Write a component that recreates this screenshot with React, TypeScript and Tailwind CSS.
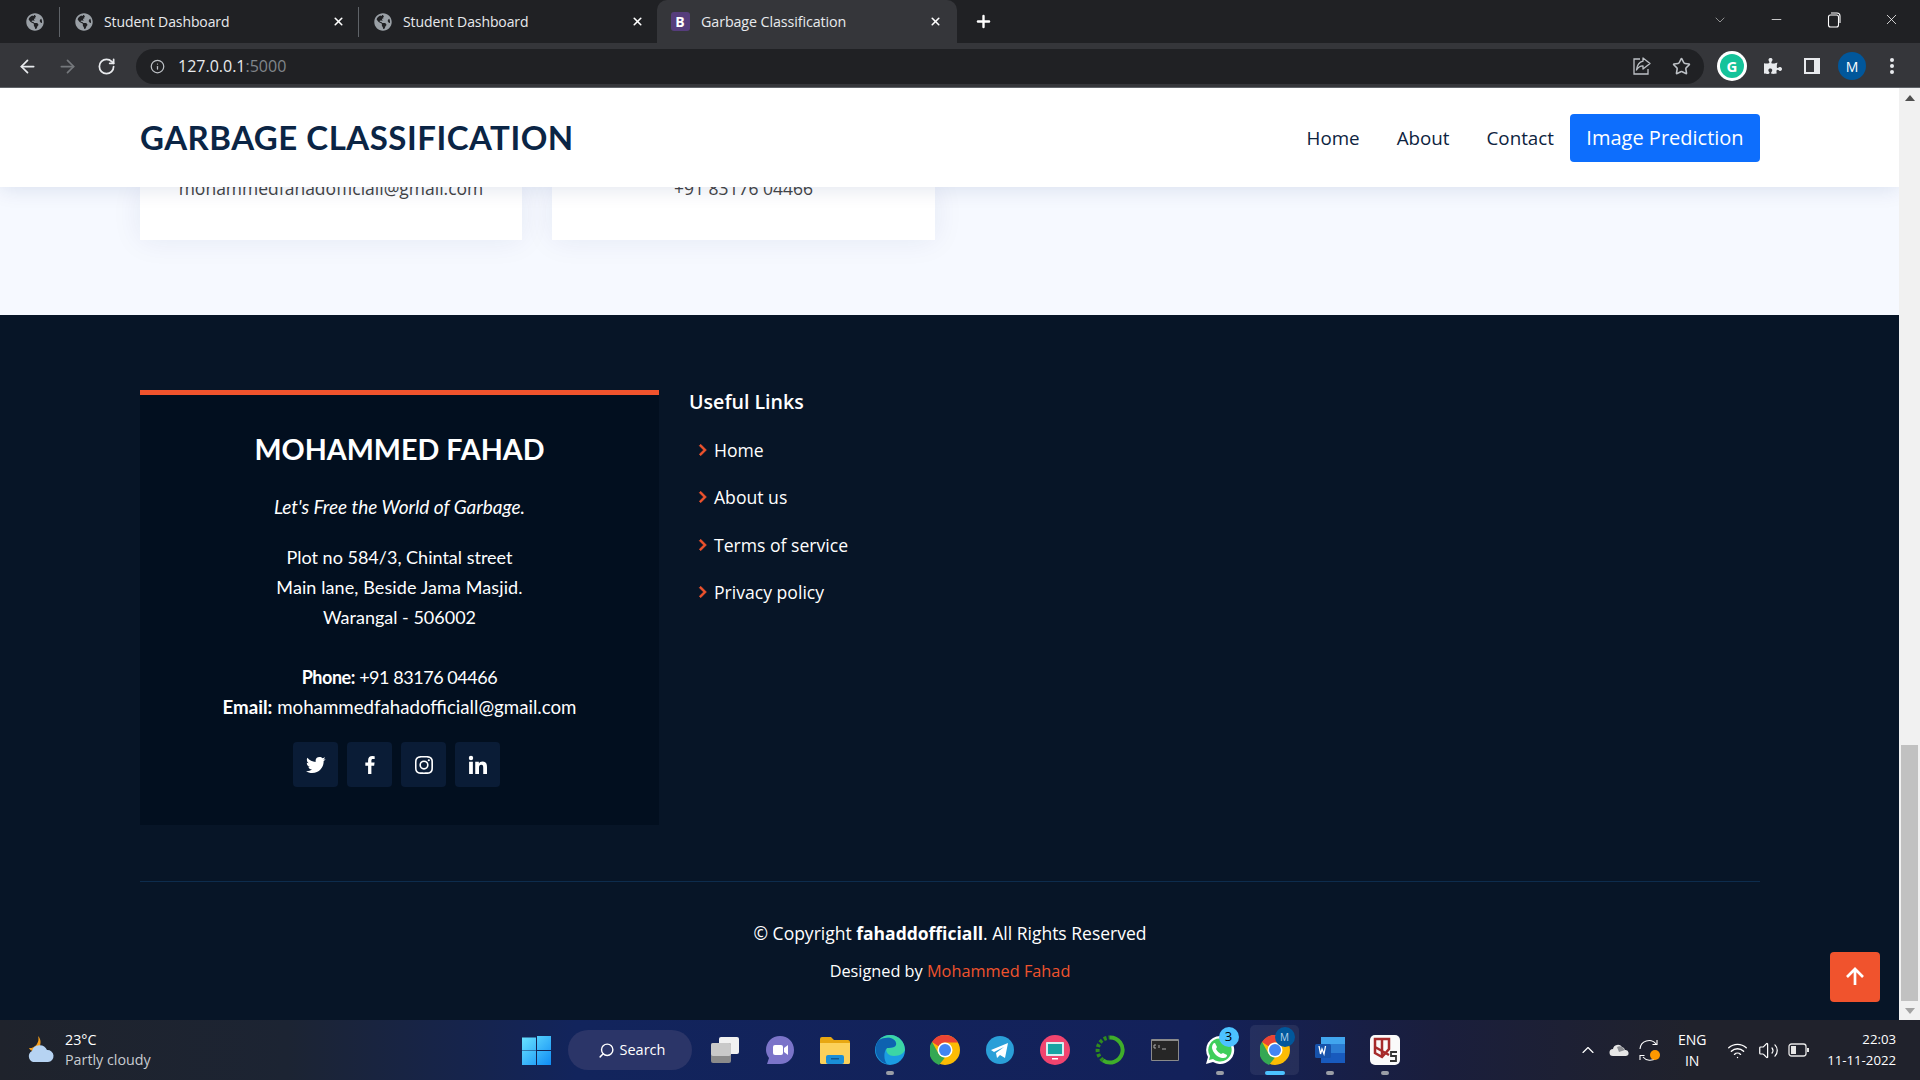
import React from "react";
import { ArrowLeft, ArrowRight, RotateCw, Info, Star, X, Plus, ChevronDown, ChevronUp, Minus, Search, Wifi, Volume2 } from "lucide-react";
import { FaGlobeAmericas, FaPuzzlePiece } from "react-icons/fa";
import { BiLogoTwitter, BiLogoFacebook, BiLogoInstagram, BiLogoLinkedin, BiChevronRight, BiUpArrowAlt } from "react-icons/bi";

const ui = "font-['Open_Sans','Noto_Sans',sans-serif]";
const rw = "font-['Lato','Open_Sans',sans-serif]";

function Tab({ title, active, icon, width }: { title: string; active?: boolean; icon: React.ReactNode; width: string }) {
  return (
    <div className={`flex items-center ${width} ${active ? "h-[43px] pl-[13px] pr-[15px] bg-[#35363a] rounded-t-[10px] self-end" : "h-[30px] pl-[14px] pr-[13px] border-l border-[#5f6368]"}`}>
      <span className={`w-[20px] h-[20px] flex items-center justify-center ${active ? "mr-[11px]" : "mr-[10px]"}`}>{icon}</span>
      <span className={`flex-1 tracking-[-0.1px] text-[#e8eaed] ${active ? "text-[14.300px]" : "text-[14px]"} ${ui}`}>{title}</span>
      <X size={13} strokeWidth={3} className="text-white" />
    </div>
  );
}

function TabStrip() {
  return (
    <div className="h-[43px] bg-[#202124] flex items-center shrink-0">
      <span className="w-[59px] flex justify-center pl-[10px]"><FaGlobeAmericas size={18} className="text-[#9aa0a6]" /></span>
      <Tab width="w-[299px]" title="Student Dashboard" icon={<FaGlobeAmericas size={18} className="text-[#9aa0a6]" />} />
      <Tab width="w-[299px]" title="Student Dashboard" icon={<FaGlobeAmericas size={18} className="text-[#9aa0a6]" />} />
      <Tab width="w-[300px]" active title="Garbage Classification" icon={<span className={`w-[19px] h-[19px] rounded-[3px] bg-[#563d7c] text-white text-[14px] font-bold flex items-center justify-center ${ui}`}>B</span>} />
      <Plus size={19} strokeWidth={3} className="text-white ml-[17px]" />
      <div className="flex-1 flex justify-end items-center text-white pr-[20px] -mt-[4px]">
        <ChevronDown size={16} strokeWidth={1} className="mr-[41px] text-[#c8c8c8]" />
        <Minus size={15} strokeWidth={1.2} className="mr-[43px]" />
        <svg width="14" height="16" viewBox="0 0 14 16" className="mr-[42px]" fill="none" stroke="white" strokeWidth="1.1"><rect x="1.5" y="3" width="10" height="12" rx="2" /><path d="M4 1h6a3 3 0 0 1 3 3v7" /></svg>
        <X size={17} strokeWidth={1.1} />
      </div>
    </div>
  );
}

function Toolbar() {
  return (
    <div className="h-[45px] bg-[#35363a] flex items-center shrink-0 border-b border-[#5f6368] pt-[2px]">
      <div className="w-[136px] flex items-center pl-[17px] gap-[19px]">
        <ArrowLeft size={21} strokeWidth={2} className="text-[#e8eaed]" />
        <ArrowRight size={21} strokeWidth={2} className="text-[#75787c]" />
        <RotateCw size={19} strokeWidth={2.2} className="text-[#e8eaed]" />
      </div>
      <div className="w-[1568px] h-[35px] rounded-full bg-[#202124] flex items-center pl-[14px] pr-[11px]">
        <Info size={15} className="text-[#bdc1c6]" />
        <span className={`ml-[13px] flex-1 text-[16px] text-[#e8eaed] ${ui}`}>127.0.0.1<span className="text-[#80868b]">:5000</span></span>
        <svg width="20" height="20" viewBox="0 0 20 20" fill="none" stroke="#bdc1c6" strokeWidth="1.300" className="mr-[20px]">
          <path d="M8 3H2v15h14v-5" />
          <path d="M11 2l7 5.500-7 5.500V9.800C8 9.800 6 11 4.500 14 5 9.500 7.500 6 11 5.200z" strokeLinejoin="round" />
        </svg>
        <Star size={19} className="text-[#bdc1c6] mr-[2px]" />
      </div>
      <div className="flex-1 flex items-center pl-[13px]">
        <span className="w-[30px] h-[30px] rounded-full bg-white flex items-center justify-center">
          <span className={`w-[24px] h-[24px] rounded-full bg-[#15c39a] text-white text-[15px] font-bold flex items-center justify-center ${ui}`}>G</span>
        </span>
        <FaPuzzlePiece size={18} className="text-[#e8eaed] ml-[17px]" />
        <svg width="18" height="18" viewBox="0 0 18 18" className="ml-[21px]"><path fillRule="evenodd" fill="#e8eaed" d="M1 1h16v16H1zM3 3v12h8V3z" /></svg>
        <span className={`ml-[17px] w-[28px] h-[28px] rounded-full bg-[#01579b] text-white text-[14px] flex items-center justify-center ${ui}`}>M</span>
        <svg width="4" height="18" viewBox="0 0 4 18" className="ml-[24px]" fill="#e8eaed"><circle cx="2" cy="3" r="2" /><circle cx="2" cy="9" r="2" /><circle cx="2" cy="15" r="2" /></svg>
      </div>
    </div>
  );
}

function Header() {
  return (
    <header className="relative z-10 h-[99px] shrink-0 bg-white shadow-[0_2px_20px_rgba(1,41,112,0.12)] flex items-center justify-between pl-[140px] pr-[139px]">
      <span className={`text-[33px] font-bold leading-none tracking-[0.5px] text-[#0b2545] ${rw}`}>GARBAGE CLASSIFICATION</span>
      <nav className={`flex items-center text-[18.8px] text-[#0d2340] ${ui}`}>
        <a className="mr-[37px] pt-[1px] -ml-[1px]">Home</a>
        <a className="mr-[37px] pt-[1px]">About</a>
        <a className="mr-[16px] pt-[1px]">Contact</a>
        <a className="w-[190px] h-[48px] rounded-[4px] bg-[#0d6efd] text-white text-[20px] flex items-center justify-center">Image Prediction</a>
      </nav>
    </header>
  );
}

function ContactCard({ text, narrow, size }: { text: string; narrow?: boolean; size: string }) {
  return (
    <div className={`h-[53px] bg-white shadow-[0_0_30px_rgba(1,41,112,0.08)] text-center ${narrow ? "w-[382px]" : "w-[383px]"}`}>
      <p className={`-mt-[11px] leading-[24px] text-[#444444] ${size} ${ui}`}>{text}</p>
    </div>
  );
}

function Section() {
  return (
    <section className="h-[128px] shrink-0 bg-[#f6f9ff] pl-[140px] flex gap-[30px]">
      <ContactCard narrow size="text-[17.5px]" text="mohammedfahadofficiall@gmail.com" />
      <ContactCard size="text-[17.5px]" text="+91 83176 04466" />
    </section>
  );
}

function Social({ children }: { children: React.ReactNode }) {
  return <a className="w-[45px] h-[45px] rounded-[4px] bg-[#0a1c36] flex items-center justify-center text-white text-[24px]">{children}</a>;
}

function Footer() {
  const links = ["Home", "About us", "Terms of service", "Privacy policy"];
  return (
    <footer className="relative flex-1 bg-[#071527] text-white pt-[75px] pl-[140px] pr-[139px]">
      <div className="flex gap-[30px]">
        <div className={`w-[519px] h-[435px] bg-[#020f1f] border-t-[5px] border-[#f0532d] pt-[37px] text-center text-[18px] leading-[30px] ${rw}`}>
          <h3 className="text-[28.700px] leading-[34px] font-bold">MOHAMMED FAHAD</h3>
          <p className="mt-[26px] italic text-[19px]">Let's Free the World of Garbage.</p>
          <p className="mt-[20px]">Plot no 584/3, Chintal street<br /><span className="tracking-[0.1px]">Main lane, Beside Jama Masjid.</span><br />Warangal - 506002</p>
          <p className="mt-[30px]"><span className="tracking-[-0.45px]"><b>Phone:</b> +91 83176 04466</span><br /><span className="text-[18.700px]"><b>Email:</b> mohammedfahadofficiall@gmail.com</span></p>
          <div className="mt-[20px] flex justify-center gap-[9px] pr-[6px]">
            <Social><BiLogoTwitter /></Social>
            <Social><BiLogoFacebook /></Social>
            <Social><BiLogoInstagram /></Social>
            <Social><BiLogoLinkedin /></Social>
          </div>
        </div>
        <div className={`pt-[1px] ${ui}`}>
          <h4 className="text-[19.600px] leading-[22px] font-semibold">Useful Links</h4>
          <ul className="mt-[13px] text-[17.600px]">
            {links.map((l) => (
              <li key={l} className="h-[47.5px] flex items-center">
                <BiChevronRight className="text-[#f0532d] text-[24px] ml-[1px] stroke-[#f0532d] stroke-[0.6px]" />
                <span>{l}</span>
              </li>
            ))}
          </ul>
        </div>
      </div>
      <div className="mt-[56px] border-t border-[#0d2c4d]" />
      <p className={`mt-[38px] text-center text-[17.5px] leading-[26px] ${ui}`}>© Copyright <b>fahaddofficiall</b>. All Rights Reserved</p>
      <p className={`mt-[12px] text-center text-[16.3px] leading-[26px] ${ui}`}>Designed by <span className="text-[#f0532d]">Mohammed Fahad</span></p>
      <a className="absolute right-[19px] top-[637px] w-[50px] h-[50px] rounded-[4px] bg-[#f0532d] flex items-center justify-center text-white text-[32px]"><BiUpArrowAlt /></a>
    </footer>
  );
}

function Scrollbar() {
  return (
    <div className="w-[21px] shrink-0 bg-[#f1f1f1] flex flex-col items-center">
      <div className="h-[16px] shrink-0 flex items-center justify-center mt-[2px]">
        <span className="w-0 h-0 border-x-[5px] border-x-transparent border-b-[6px] border-b-[#505050]" />
      </div>
      <div className="flex-1" />
      <div className="w-[17px] h-[256px] bg-[#c1c1c1] shrink-0" />
      <div className="h-[19px] shrink-0 flex items-center justify-center">
        <span className="w-0 h-0 border-x-[5px] border-x-transparent border-t-[6px] border-t-[#a3a3a3]" />
      </div>
    </div>
  );
}

function Slot({ children, dot, active }: { children: React.ReactNode; dot?: boolean; active?: boolean }) {
  return (
    <div className="relative w-[55px] h-[52px] flex items-center justify-center">
      {active && <span className="absolute left-[3px] right-[3px] top-[1px] bottom-[1px] rounded-[5px] bg-[#ffffff12]" />}
      <span className="relative flex">{children}</span>
      {dot && <span className="absolute bottom-[1px] left-1/2 -translate-x-1/2 w-[8px] h-[4px] rounded-full bg-[#9a9ea6]" />}
      {active && <span className="absolute bottom-[1px] left-1/2 -translate-x-1/2 w-[20px] h-[4px] rounded-full bg-[#4cc2ff]" />}
    </div>
  );
}

const ChromeIcon = () => (
  <svg width="30" height="30" viewBox="0 0 30 30">
    <circle cx="15" cy="15" r="15" fill="#fbbc04" />
    <path d="M15 0a15 15 0 0 1 13 7.5H15a7.5 7.5 0 0 0-6.5 3.8L2 7A15 15 0 0 1 15 0z" fill="#ea4335" />
    <path d="M2 7l6.5 11.5A7.5 7.5 0 0 0 15 22.5L9 30A15 15 0 0 1 2 7z" fill="#34a853" />
    <circle cx="15" cy="15" r="7.5" fill="white" /><circle cx="15" cy="15" r="6" fill="#4285f4" />
  </svg>
);

function Taskbar() {
  return (
    <div className="relative h-[60px] shrink-0 bg-[linear-gradient(90deg,#1f232c_0%,#1c2433_15%,#12245c_30%,#13215a_62%,#1a1e3c_75%,#20222c_88%)] flex items-center text-white">
      <div className={`absolute left-[24px] top-0 h-full flex items-center ${ui}`}>
        <svg width="31" height="30" viewBox="0 0 31 30">
          <path d="M14 1a9 9 0 0 1-9 12 5 5 0 0 0 5 3 9 9 0 0 0 4-15z" fill="#f59e1b" />
          <path d="M9 27a6 6 0 0 1-1-11 8 8 0 0 1 15-1 6 6 0 0 1 1 12z" fill="#b6d3f2" />
        </svg>
        <div className="ml-[10px] text-[14.300px] leading-[20px]">
          <div>23°C</div>
          <div className="text-[#c8cbd1]">Partly cloudy</div>
        </div>
      </div>
      <div className="absolute left-[522px] top-0 h-full flex items-center">
        <svg width="29" height="29" viewBox="0 0 29 29">
          <defs><linearGradient id="w" x1="0" y1="0" x2="1" y2="1"><stop offset="0" stopColor="#6be4ff" /><stop offset="1" stopColor="#0f8cf5" /></linearGradient></defs>
          <path fill="url(#w)" d="M0 1.500h14v13H0zM15 0h14v14H15zM0 15h14v14H0zM15 15h14v14H15z" />
        </svg>
        <div className={`ml-[17px] w-[124px] h-[40px] rounded-full bg-[#2b3568] flex items-center justify-center text-[14.500px] pl-[3px] ${ui}`}>
          <Search size={17} className="mr-[5px] -scale-x-100" />Search
        </div>
      </div>
      <div className="absolute left-[697px] top-[4px] flex">
        <Slot>
          <svg width="30" height="28" viewBox="0 0 30 28"><rect x="9" y="1" width="20" height="17" rx="2" fill="#f1f1f1" /><rect x="1" y="7" width="20" height="20" rx="2" fill="#8b8b8b" /><rect x="1" y="7" width="20" height="13" rx="2" fill="#c9c9c9" /></svg>
        </Slot>
        <Slot>
          <svg width="30" height="30" viewBox="0 0 30 30"><path d="M15 1c8 0 14 6 14 14s-6 14-14 14H2l2-6C2 20 1 18 1 15 1 7 7 1 15 1z" fill="#7b74c9" /><rect x="8" y="10" width="10" height="10" rx="2" fill="white" /><path d="M19 13l4-3v10l-4-3z" fill="white" /></svg>
        </Slot>
        <Slot>
          <svg width="30" height="28" viewBox="0 0 30 28"><path d="M0 3a2 2 0 0 1 2-2h9l3 3h14a2 2 0 0 1 2 2v20a2 2 0 0 1-2 2H2a2 2 0 0 1-2-2z" fill="#e8a712" /><path d="M0 7h30v19a2 2 0 0 1-2 2H2a2 2 0 0 1-2-2z" fill="#fcd15b" /><rect x="6" y="19" width="18" height="9" rx="2" fill="#1a8fd8" /><rect x="11" y="22" width="8" height="1.500" fill="#0d5a96" /></svg>
        </Slot>
        <Slot dot>
          <svg width="30" height="30" viewBox="0 0 30 30"><circle cx="15" cy="15" r="15" fill="#1b9de2" /><path d="M30 15A15 15 0 0 0 3 6c5-4 16-5 18 2 1 4-4 5-9 5-2 2 0 8 7 8 6 0 10-3 11-6z" fill="#3cd5a5" /><path d="M3 6C-2 14 1 26 12 29c-3-3-4-12 0-16 5 0 10-1 9-5C19 1 8 2 3 6z" fill="#0e62b0" /></svg>
        </Slot>
        <Slot><ChromeIcon /></Slot>
        <Slot>
          <svg width="28" height="28" viewBox="0 0 28 28"><circle cx="14" cy="14" r="14" fill="#2a9fd8" /><path d="M5 14l17-7-3 15-5-3-3 3-1-5 8-6-10 5z" fill="white" /></svg>
        </Slot>
        <Slot>
          <svg width="30" height="30" viewBox="0 0 30 30"><circle cx="15" cy="15" r="15" fill="#f0446f" /><rect x="6" y="7" width="18" height="14" rx="1" fill="#d8eef0" /><rect x="8" y="9" width="14" height="10" fill="#17a3a3" /><rect x="12" y="23" width="6" height="1.500" fill="white" /></svg>
        </Slot>
        <Slot>
          <svg width="30" height="30" viewBox="0 0 30 30" fill="none"><path d="M15 2.500a12.500 12.500 0 1 1-7 22.800" stroke="#3fae2a" strokeWidth="4" /><path d="M8 25.300A12.500 12.500 0 0 1 15 2.500" stroke="#2f8c1e" strokeWidth="4" strokeDasharray="3 2" /></svg>
        </Slot>
        <Slot>
          <svg width="28" height="22" viewBox="0 0 28 22"><rect width="28" height="22" rx="1" fill="#8a8a8a" /><rect x="1" y="2" width="26" height="19" fill="#262626" /><path d="M5 6H3v3h2M8 6v3M11 10h4" stroke="#aaa" fill="none" /></svg>
        </Slot>
        <Slot dot>
          <svg width="30" height="30" viewBox="0 0 30 30"><path d="M15 1a14 14 0 0 0-12 21L1 29l7-2A14 14 0 1 0 15 1z" fill="white" /><path d="M15 3.500a11.500 11.500 0 0 0-10 17.500l-1 4 4-1a11.500 11.500 0 1 0 7-20.500z" fill="#3fce5b" /><path d="M10 8l2 4-1 2c1 2 3 4 5 5l2-1 4 2c0 3-3 3-5 3-5-1-9-5-10-10 0-3 1-5 3-5z" fill="white" /></svg>
          <span className={`absolute -right-[4px] -top-[8px] w-[20px] h-[20px] rounded-full bg-[#4cc2ff] text-black text-[13px] flex items-center justify-center ${ui}`}>3</span>
        </Slot>
        <Slot active>
          <ChromeIcon />
          <span className={`absolute -right-[5px] -top-[8px] w-[20px] h-[20px] rounded-full bg-[#01579b] text-[#b8d4ec] text-[10px] flex items-center justify-center ${ui}`}>M</span>
        </Slot>
        <Slot dot>
          <svg width="30" height="28" viewBox="0 0 30 28"><rect x="6" y="1" width="24" height="26" rx="2" fill="#2b7cd3" /><rect x="6" y="1" width="24" height="7" fill="#41a5ee" /><rect x="6" y="17" width="24" height="10" fill="#185abd" /><rect x="0" y="8" width="16" height="14" rx="1.500" fill="#1652ab" /><path d="M3 11l1.500 8 1.500-5 2 5 1.500-8" transform="translate(1 -1)" stroke="white" strokeWidth="1.300" fill="none" /></svg>
        </Slot>
        <Slot dot>
          <svg width="30" height="30" viewBox="0 0 30 30"><rect width="30" height="30" rx="5" fill="#fafafa" /><path d="M5 4h14v10l-7 8-7-4zM12 4v18M5 12l14 8" stroke="#a62b2b" strokeWidth="2.500" fill="none" /><path d="M27 17h-6v4h5v5h-6" stroke="#333" strokeWidth="1.800" fill="none" /></svg>
        </Slot>
      </div>
      <div className={`absolute right-[24px] top-0 h-full flex items-center ${ui}`}>
        <ChevronUp size={20} strokeWidth={1.4} className="mr-[11px]" />
        <svg width="20" height="14" viewBox="0 0 20 14" className="mr-[9px]"><path d="M4 13a3.500 3.500 0 0 1 0-7 5 5 0 0 1 9-2 4 4 0 0 1 3 3 3 3 0 0 1 1 6z" fill="#e6e6e6" /><path d="M8 4a5 5 0 0 1 5 0l3 3-6 2z" fill="#8d8f94" /></svg>
        <span className="relative w-[22px] h-[22px] mr-[14px]">
          <svg width="22" height="22" viewBox="0 0 22 22" fill="none" stroke="white" strokeWidth="1.100">
            <path d="M2 10a9 9 0 0 1 16-5M19 1v4.500h-4.500" />
            <path d="M18 19a9 9 0 0 1-13-1M2 21v-4.500h4.500" />
          </svg>
          <span className="absolute right-0 bottom-[1px] w-[10px] h-[10px] rounded-full bg-[#ff9800]" />
        </span>
        <div className="w-[36px] text-center text-[14px] leading-[21px] mr-[17px]"><div>ENG</div><div>IN</div></div>
        <Wifi size={21} strokeWidth={1.6} className="mr-[10px]" />
        <Volume2 size={21} strokeWidth={1.4} className="mr-[9px]" />
        <svg width="21" height="14" viewBox="0 0 21 14" fill="none" className="mr-[18px]"><rect x="1" y="1" width="17" height="12" rx="2.500" stroke="#e6e6e6" strokeWidth="1.300" /><rect x="3" y="3" width="5" height="8" fill="#e6e6e6" /><rect x="19" y="5" width="2" height="4" fill="#e6e6e6" /></svg>
        <div className="text-right text-[13.200px] leading-[21px]"><div>22:03</div><div>11-11-2022</div></div>
      </div>
    </div>
  );
}

export default function App() {
  return (
    <div className="w-[1920px] h-[1080px] overflow-hidden flex flex-col bg-[#202124]">
      <TabStrip />
      <Toolbar />
      <div className="flex h-[932px] shrink-0">
        <div className="flex-1 flex flex-col overflow-hidden">
          <Header />
          <Section />
          <Footer />
        </div>
        <Scrollbar />
      </div>
      <Taskbar />
    </div>
  );
}
